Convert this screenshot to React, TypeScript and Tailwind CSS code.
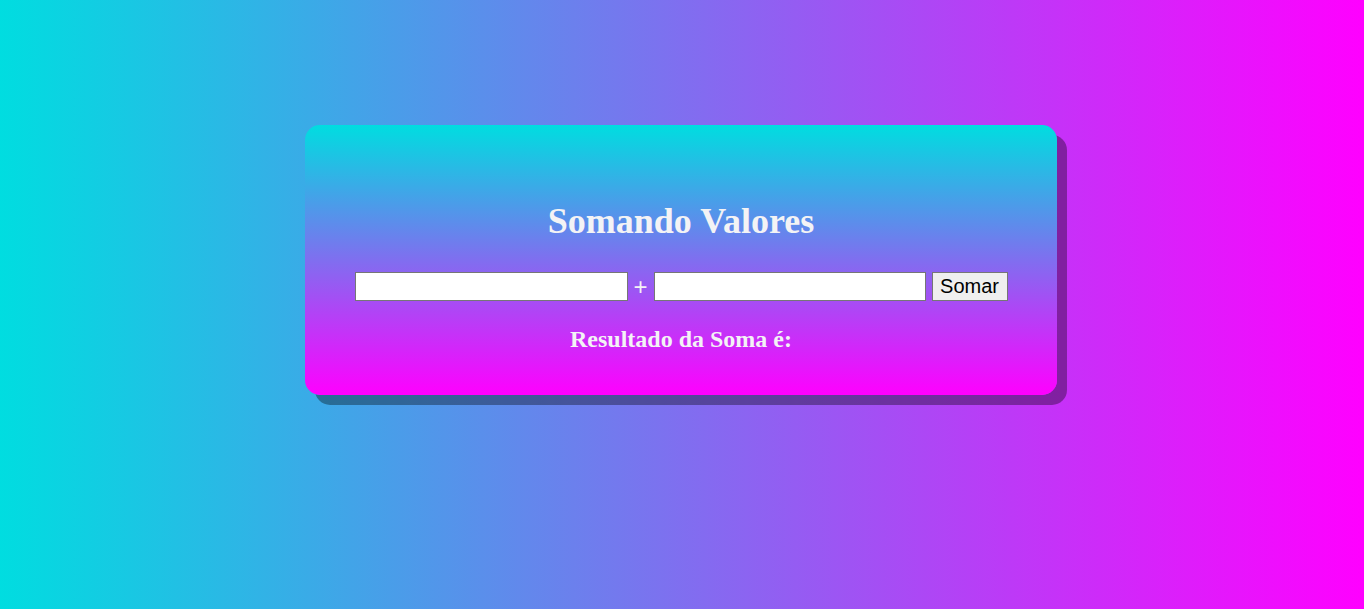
import React, { useState } from "react";

export default function App() {
  const [a, setA] = useState("");
  const [b, setB] = useState("");
  const [result, setResult] = useState<string>("");

  const somar = () => {
    const n = Number(a) + Number(b);
    setResult(isNaN(n) ? "" : String(n));
  };

  return (
    <div className="min-h-screen h-[609px] w-full bg-[linear-gradient(to_right,#00dde0,#ff00ff)] pt-[125px] pr-[2px]">
      <div className="mx-auto w-[752px] h-[270px] rounded-[15px] bg-[linear-gradient(to_bottom,#00dde0,#ff00ff)] shadow-[10px_10px_0_rgba(0,0,0,0.35)] pt-[76px] flex flex-col items-center">
        <h1 className="font-['Liberation_Serif',serif] font-bold text-[36px] leading-[41px] text-[#f3f3f5]">
          Somando Valores
        </h1>

        <div className="mt-[30px] flex items-center gap-[6px] font-['Liberation_Sans',Arial,sans-serif] text-[20px]">
          <input
            type="text"
            value={a}
            onChange={(e) => setA(e.target.value)}
            className="w-[273px] h-[29px] bg-white border border-[#767676] px-[2px] text-black outline-none"
          />
          <span className="w-[14px] text-center text-[24px] leading-[29px] text-[#f3f3f5]">+</span>
          <input
            type="text"
            value={b}
            onChange={(e) => setB(e.target.value)}
            className="w-[272px] h-[29px] bg-white border border-[#767676] px-[2px] text-black outline-none"
          />
          <button
            onClick={somar}
            className="w-[76px] h-[29px] bg-[#efefef] border border-[#767676] text-black leading-[27px]"
          >
            Somar
          </button>
        </div>

        <p className="mt-[24px] font-['Liberation_Serif',serif] font-bold text-[24px] leading-[28px] text-[#f3f3f5]">
          Resultado da Soma é: {result}
        </p>
      </div>
    </div>
  );
}
